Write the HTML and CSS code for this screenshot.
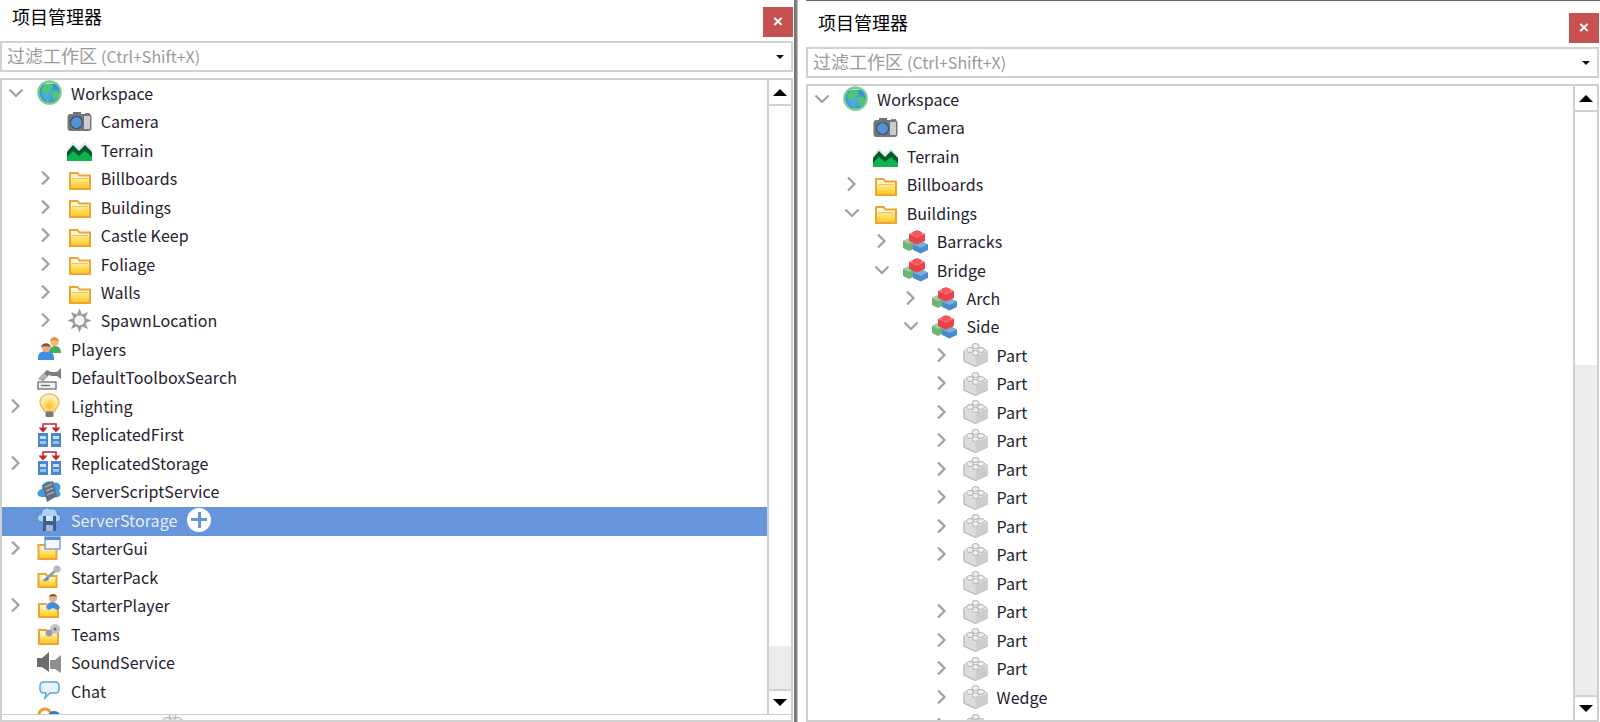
FILE: index.html
```html
<!DOCTYPE html>
<html lang="zh-CN">
<head>
  <meta charset="UTF-8">
  <title>项目管理器</title>
  <link rel="stylesheet" href="styles.css">
</head>
<body>
  <!-- icon sprite -->
  <svg class="sprite" xmlns="http://www.w3.org/2000/svg">
    <defs>
      <linearGradient id="foldFill" x1="0" y1="0" x2="0" y2="1">
        <stop offset="0" stop-color="#fff8e4"/><stop offset=".34" stop-color="#fff4cc"/><stop offset=".38" stop-color="#ffe987"/><stop offset="1" stop-color="#fdc51e"/>
      </linearGradient>
      <radialGradient id="globeFill" cx=".42" cy=".6" r=".65">
        <stop offset="0" stop-color="#56aef0"/><stop offset="1" stop-color="#2e86cc"/>
      </radialGradient>
      <radialGradient id="bulbFill" cx=".5" cy=".68" r=".62">
        <stop offset="0" stop-color="#fbb92a"/><stop offset=".55" stop-color="#ffe48a"/><stop offset="1" stop-color="#fff6d6"/>
      </radialGradient>
    </defs>
    <symbol id="chev-r" viewBox="0 0 16 16"><path d="M4 1.500 10.500 8 4 14.500" fill="none" stroke="#a0a0a0" stroke-width="2.200"/></symbol>
    <symbol id="chev-d" viewBox="0 0 16 16"><path d="M1.500 4.500 8 11l6.500-6.500" fill="none" stroke="#a0a0a0" stroke-width="2.200"/></symbol>
    <symbol id="globe" viewBox="0 0 25 25">
      <circle cx="12.500" cy="12.500" r="11.200" fill="url(#globeFill)" stroke="#7ccf84" stroke-width="2.200"/>
      <path d="M4 9c3-5 8-6 11-4s-1 4-2 6-4 1-4 3-3 1-5-5zM14 12c3-2 7-2 8 1s-3 7-5 7-1-4-2-5-2-2-1-3zM9 18c2 0 3 1 3 3s-3 0-3-3z" fill="#4ec676"/>
      <path d="M6 5q6-4 12-1-6-1-12 1z" fill="#d8f3e0"/>
    </symbol>
    <symbol id="camera" viewBox="0 0 25 25">
      <rect x="6" y="3" width="8" height="4" fill="#6e7277"/>
      <rect x="18" y="4" width="5" height="3" fill="#85898e"/>
      <rect x=".5" y="5" width="24" height="17" rx="3" fill="#73777c"/>
      <rect x="17" y="7" width="6" height="13" fill="#c9ccd0"/>
      <circle cx="9.500" cy="13.500" r="6" fill="#4f93dc" stroke="#4a4e53" stroke-width="1.200"/>
    </symbol>
    <symbol id="terrain" viewBox="0 0 25 25">
      <path d="M0 12 6 5l6 5 6-5 7 7v10H0z" fill="#e3ebe5"/>
      <path d="M0 15 6 8l6 6 6-6 7 7v7H0z" fill="#065a2c"/>
      <path d="M0 20l6-6 6 5 6-5 7 6v4H0z" fill="#10b24e"/>
    </symbol>
    <symbol id="folder" viewBox="0 0 25 25">
      <path d="M3 7h7.500l2 2.500H23V23H3z" fill="url(#foldFill)" stroke="#f0a430" stroke-width="2"/>
      <path d="M5 12.500h16" stroke="#e8c474" stroke-width="1"/>
    </symbol>
    <symbol id="spawn" viewBox="0 0 25 25">
      <polygon points="24.500,12.500 18.500,10 21,4 15,6.500 12.500,.5 10,6.500 4,4 6.500,10 .5,12.500 6.500,15 4,21 10,18.500 12.500,24.500 15,18.500 21,21 18.500,15" fill="#9c9c9c"/>
      <circle cx="12.500" cy="12.500" r="5" fill="#f4f4f4"/>
    </symbol>
    <symbol id="players" viewBox="0 0 25 25">
      <path d="M12 17q0-7 6-7t6 7z" fill="#48ad55"/>
      <circle cx="17.500" cy="6" r="4" fill="#f3b673"/>
      <path d="M13 5c1-5 8-5 9 0-3-1-6-1-9 0z" fill="#e88a2a"/>
      <path d="M1 24v-2q0-7 8-7t8 7v2z" fill="#3f90de"/>
      <circle cx="9" cy="12" r="4.200" fill="#e9ad85"/>
      <path d="M4 11c1-5 9-5 10 0-3-1-7-1-10 0z" fill="#8c5530"/>
    </symbol>
    <symbol id="toolbox" viewBox="0 0 25 25">
      <path d="M1 14 10 5l4 2h6l4-4v11l-4-3h-5l-3-1-6 6z" fill="#7d7d7d"/>
      <path d="M1 14l6-6 4 4-6 3z" fill="#b4b4b4"/>
      <rect x="1" y="17" width="18" height="7" fill="#efefef" stroke="#6f6f6f" stroke-width="1.300"/>
      <path d="M4 20.500h9" stroke="#6f6f6f" stroke-width="1.300"/>
    </symbol>
    <symbol id="bulb" viewBox="0 0 25 25">
      <path d="M12.500 1c6 0 9.500 4 9.500 8.500 0 4-3.500 5.500-4.500 9h-10C6.500 15 3 13.500 3 9.500 3 5 6.500 1 12.500 1z" fill="url(#bulbFill)" stroke="#ecbb66" stroke-width="1.500"/>
      <rect x="8.500" y="18.500" width="8" height="5.500" rx="1.500" fill="#77797c"/>
    </symbol>
    <symbol id="replicated" viewBox="0 0 25 25">
      <path d="M6 7V2h13v5" fill="none" stroke="#c8242c" stroke-width="1.500"/>
      <path d="M1.500 5.500h9l-4.500 5zM14.500 5.500h9l-4.500 5z" fill="#c8242c"/>
      <rect x="1" y="11" width="10" height="14" fill="#4a86cc"/>
      <rect x="14" y="11" width="10" height="14" fill="#4a86cc"/>
      <path d="M3 14h6v3H3zM16 14h6v3h-6z" fill="#c6def6"/>
      <path d="M3 19h6v3H3zM16 19h6v3h-6z" fill="#98c1ea"/>
    </symbol>
    <symbol id="script-svc" viewBox="0 0 25 25">
      <path d="M5 18c-6 0-6-7 0-8 0-7 7-10 11-6 5-2 10 3 6 8 4 4-1 8-6 6z" fill="#3f9be0"/>
      <path d="M5 6l11-4 4 15-10 6z" fill="#66707c"/>
      <path d="M8 8l7-3M9 12l7-3M10 16l7-3" stroke="#b5bdc6" stroke-width="1.200"/>
    </symbol>
    <symbol id="storage-svc" viewBox="0 0 25 25">
      <path d="M4 15c-5-1-5-7 0-8 1-6 6-7 9-5 5-1 8 2 7 5 5 1 5 7 0 8z" fill="#a9d3f5" stroke="#3f86cc" stroke-width="1"/>
      <path d="M6 9h13v15H6z" fill="#3d5f88"/>
      <rect x="9" y="9" width="7" height="5" fill="#d8e4f2"/>
      <rect x="9" y="18" width="7" height="6" fill="#9fb8d4"/>
    </symbol>
    <symbol id="starter-gui" viewBox="0 0 25 25">
      <path d="M1.500 9h7l2 2h9v12h-18z" fill="url(#foldFill)" stroke="#f0a430" stroke-width="2"/>
      <rect x="8" y="1" width="15" height="12" fill="#f4f7fb" stroke="#5a8fd0" stroke-width="1.200"/>
      <rect x="8" y="1" width="15" height="3" fill="#4f8dd6"/>
    </symbol>
    <symbol id="starter-pack" viewBox="0 0 25 25">
      <path d="M1.500 10h7l2 2h9v11h-18z" fill="url(#foldFill)" stroke="#f0a430" stroke-width="2"/>
      <path d="M7 17 19 6" stroke="#9a9ea3" stroke-width="3"/>
      <circle cx="20" cy="5" r="3.500" fill="#b4b7bb"/>
      <path d="M7 17l5-1-2-3z" fill="#4a90dc"/>
    </symbol>
    <symbol id="starter-player" viewBox="0 0 25 25">
      <path d="M2 11h7l2 2h10v11H2z" fill="url(#foldFill)" stroke="#f0a430" stroke-width="2"/>
      <path d="M9 15q2-7 7-6t7 6l-3 2-4-2-4 2z" fill="#3f90de"/>
      <circle cx="16" cy="5" r="4" fill="#e9ad85"/>
      <path d="M12 4c1-4 7-4 8 0-3-1-5-1-8 0z" fill="#8c5530"/>
    </symbol>
    <symbol id="teams" viewBox="0 0 25 25">
      <path d="M2 9h7l2 2h10v12H2z" fill="url(#foldFill)" stroke="#f0a430" stroke-width="2"/>
      <circle cx="18" cy="8" r="5" fill="#c2c4c6"/>
      <circle cx="12" cy="12" r="3.500" fill="#9b9da0"/>
      <circle cx="18" cy="8" r="1.500" fill="#6e7073"/>
    </symbol>
    <symbol id="sound" viewBox="0 0 25 25">
      <path d="M0 8h5l7-6v20l-7-5H0z" fill="#6b6d70"/>
      <path d="M24 5v18l-6-4h-5V10h5z" fill="#8d8f92"/>
    </symbol>
    <symbol id="chat" viewBox="0 0 25 25">
      <path d="M7 4h11q4 0 4 4v3q0 4-4 4h-5l-5 5 1-5H7q-4 0-4-4V8q0-4 4-4z" fill="#e9f4fd" stroke="#54a7e2" stroke-width="1.500"/>
    </symbol>
    <symbol id="model" viewBox="0 0 25 25">
      <polygon points="0,12 6,9 12,12 12,19 6,22 0,19" fill="#6fb477"/>
      <polygon points="0,12 6,15 12,12 6,9" fill="#9ccfa2"/>
      <polygon points="10,15.500 17.500,12 25,15.500 25,21 17.500,24.500 10,21" fill="#4a8ccb"/>
      <polygon points="10,15.500 17.500,19 25,15.500 17.500,12" fill="#79aede"/>
      <polygon points="6,5 14,1.500 22,5 22,12 14,15.500 6,12" fill="#e9434a"/>
      <polygon points="6,5 14,8.500 22,5 14,1.500" fill="#f98085"/>
      <ellipse cx="14" cy="4.500" rx="4.500" ry="3" fill="#f2575d"/>
    </symbol>
    <symbol id="part" viewBox="0 0 25 25">
      <polygon points="12.500,4 24,9 24,19 12.500,24.500 1,19 1,9" fill="#dcdcdc" stroke="#b8b8b8" stroke-width="1.300"/>
      <polygon points="12.500,14 24,9 24,19 12.500,24.500" fill="#cdcdcd"/>
      <polygon points="1,9 12.500,14 24,9 12.500,4" fill="#f6f6f6"/>
      <ellipse cx="12.500" cy="4" rx="3.500" ry="2.500" fill="#eee" stroke="#b0b0b0"/>
      <ellipse cx="7" cy="8" rx="3.500" ry="2.500" fill="#eee" stroke="#b0b0b0"/>
      <ellipse cx="18" cy="8" rx="3.500" ry="2.500" fill="#eee" stroke="#b0b0b0"/>
      <ellipse cx="12.500" cy="11" rx="3.500" ry="2.500" fill="#eee" stroke="#b0b0b0"/>
    </symbol>
    <symbol id="localize" viewBox="0 0 25 25">
      <circle cx="8" cy="8" r="6" fill="none" stroke="#f09a2c" stroke-width="3"/>
      <path d="M10 14q0-10 7-10t8 10z" fill="#2f78c4"/>
    </symbol>
  </svg>

  <div class="page">
    <section class="panel panel-left">
      <header class="titlebar">
        <h1 class="title">项目管理器</h1>
        <button class="close">×</button>
      </header>
      <div class="filter">
        <span class="filter-text">过滤工作区 <small>(Ctrl+Shift+X)</small></span>
        <span class="drop"></span>
      </div>
      <div class="tree">
        <div class="rows">
          <div class="row"><span class="tw"><svg class="chev"><use href="#chev-d"/></svg></span><svg class="ico"><use href="#globe"/></svg><span class="label">Workspace</span></div>
          <div class="row d1"><span class="tw"></span><svg class="ico"><use href="#camera"/></svg><span class="label">Camera</span></div>
          <div class="row d1"><span class="tw"></span><svg class="ico"><use href="#terrain"/></svg><span class="label">Terrain</span></div>
          <div class="row d1"><span class="tw"><svg class="chev"><use href="#chev-r"/></svg></span><svg class="ico"><use href="#folder"/></svg><span class="label">Billboards</span></div>
          <div class="row d1"><span class="tw"><svg class="chev"><use href="#chev-r"/></svg></span><svg class="ico"><use href="#folder"/></svg><span class="label">Buildings</span></div>
          <div class="row d1"><span class="tw"><svg class="chev"><use href="#chev-r"/></svg></span><svg class="ico"><use href="#folder"/></svg><span class="label">Castle Keep</span></div>
          <div class="row d1"><span class="tw"><svg class="chev"><use href="#chev-r"/></svg></span><svg class="ico"><use href="#folder"/></svg><span class="label">Foliage</span></div>
          <div class="row d1"><span class="tw"><svg class="chev"><use href="#chev-r"/></svg></span><svg class="ico"><use href="#folder"/></svg><span class="label">Walls</span></div>
          <div class="row d1"><span class="tw"><svg class="chev"><use href="#chev-r"/></svg></span><svg class="ico"><use href="#spawn"/></svg><span class="label">SpawnLocation</span></div>
          <div class="row"><span class="tw"></span><svg class="ico"><use href="#players"/></svg><span class="label">Players</span></div>
          <div class="row"><span class="tw"></span><svg class="ico"><use href="#toolbox"/></svg><span class="label">DefaultToolboxSearch</span></div>
          <div class="row"><span class="tw"><svg class="chev"><use href="#chev-r"/></svg></span><svg class="ico"><use href="#bulb"/></svg><span class="label">Lighting</span></div>
          <div class="row"><span class="tw"></span><svg class="ico"><use href="#replicated"/></svg><span class="label">ReplicatedFirst</span></div>
          <div class="row"><span class="tw"><svg class="chev"><use href="#chev-r"/></svg></span><svg class="ico"><use href="#replicated"/></svg><span class="label">ReplicatedStorage</span></div>
          <div class="row"><span class="tw"></span><svg class="ico"><use href="#script-svc"/></svg><span class="label">ServerScriptService</span></div>
          <div class="row selected"><span class="tw"></span><svg class="ico"><use href="#storage-svc"/></svg><span class="label">ServerStorage</span><span class="add"></span></div>
          <div class="row"><span class="tw"><svg class="chev"><use href="#chev-r"/></svg></span><svg class="ico"><use href="#starter-gui"/></svg><span class="label">StarterGui</span></div>
          <div class="row"><span class="tw"></span><svg class="ico"><use href="#starter-pack"/></svg><span class="label">StarterPack</span></div>
          <div class="row"><span class="tw"><svg class="chev"><use href="#chev-r"/></svg></span><svg class="ico"><use href="#starter-player"/></svg><span class="label">StarterPlayer</span></div>
          <div class="row"><span class="tw"></span><svg class="ico"><use href="#teams"/></svg><span class="label">Teams</span></div>
          <div class="row"><span class="tw"></span><svg class="ico"><use href="#sound"/></svg><span class="label">SoundService</span></div>
          <div class="row"><span class="tw"></span><svg class="ico"><use href="#chat"/></svg><span class="label">Chat</span></div>
          <div class="row row-cut"><span class="tw"></span><svg class="ico"><use href="#localize"/></svg><span class="label">LocalizationService</span></div>
        </div>
        <div class="vscroll">
          <div class="sb-btn"><span class="arrow-up"></span></div>
          <div class="thumb thumb-left"></div>
          <div class="track"></div>
          <div class="sb-btn sb-btn-down"><span class="arrow-down"></span></div>
        </div>
      </div>
      <div class="strip"><svg class="ico strip-ico"><use href="#part"/></svg></div>
    </section>

    <div class="splitter"></div>

    <section class="panel panel-right">
      <header class="titlebar">
        <h1 class="title">项目管理器</h1>
        <button class="close">×</button>
      </header>
      <div class="filter">
        <span class="filter-text">过滤工作区 <small>(Ctrl+Shift+X)</small></span>
        <span class="drop"></span>
      </div>
      <div class="tree">
        <div class="rows">
          <div class="row"><span class="tw"><svg class="chev"><use href="#chev-d"/></svg></span><svg class="ico"><use href="#globe"/></svg><span class="label">Workspace</span></div>
          <div class="row d1"><span class="tw"></span><svg class="ico"><use href="#camera"/></svg><span class="label">Camera</span></div>
          <div class="row d1"><span class="tw"></span><svg class="ico"><use href="#terrain"/></svg><span class="label">Terrain</span></div>
          <div class="row d1"><span class="tw"><svg class="chev"><use href="#chev-r"/></svg></span><svg class="ico"><use href="#folder"/></svg><span class="label">Billboards</span></div>
          <div class="row d1"><span class="tw"><svg class="chev"><use href="#chev-d"/></svg></span><svg class="ico"><use href="#folder"/></svg><span class="label">Buildings</span></div>
          <div class="row d2"><span class="tw"><svg class="chev"><use href="#chev-r"/></svg></span><svg class="ico"><use href="#model"/></svg><span class="label">Barracks</span></div>
          <div class="row d2"><span class="tw"><svg class="chev"><use href="#chev-d"/></svg></span><svg class="ico"><use href="#model"/></svg><span class="label">Bridge</span></div>
          <div class="row d3"><span class="tw"><svg class="chev"><use href="#chev-r"/></svg></span><svg class="ico"><use href="#model"/></svg><span class="label">Arch</span></div>
          <div class="row d3"><span class="tw"><svg class="chev"><use href="#chev-d"/></svg></span><svg class="ico"><use href="#model"/></svg><span class="label">Side</span></div>
          <div class="row d4"><span class="tw"><svg class="chev"><use href="#chev-r"/></svg></span><svg class="ico"><use href="#part"/></svg><span class="label">Part</span></div>
          <div class="row d4"><span class="tw"><svg class="chev"><use href="#chev-r"/></svg></span><svg class="ico"><use href="#part"/></svg><span class="label">Part</span></div>
          <div class="row d4"><span class="tw"><svg class="chev"><use href="#chev-r"/></svg></span><svg class="ico"><use href="#part"/></svg><span class="label">Part</span></div>
          <div class="row d4"><span class="tw"><svg class="chev"><use href="#chev-r"/></svg></span><svg class="ico"><use href="#part"/></svg><span class="label">Part</span></div>
          <div class="row d4"><span class="tw"><svg class="chev"><use href="#chev-r"/></svg></span><svg class="ico"><use href="#part"/></svg><span class="label">Part</span></div>
          <div class="row d4"><span class="tw"><svg class="chev"><use href="#chev-r"/></svg></span><svg class="ico"><use href="#part"/></svg><span class="label">Part</span></div>
          <div class="row d4"><span class="tw"><svg class="chev"><use href="#chev-r"/></svg></span><svg class="ico"><use href="#part"/></svg><span class="label">Part</span></div>
          <div class="row d4"><span class="tw"><svg class="chev"><use href="#chev-r"/></svg></span><svg class="ico"><use href="#part"/></svg><span class="label">Part</span></div>
          <div class="row d4"><span class="tw"></span><svg class="ico"><use href="#part"/></svg><span class="label">Part</span></div>
          <div class="row d4"><span class="tw"><svg class="chev"><use href="#chev-r"/></svg></span><svg class="ico"><use href="#part"/></svg><span class="label">Part</span></div>
          <div class="row d4"><span class="tw"><svg class="chev"><use href="#chev-r"/></svg></span><svg class="ico"><use href="#part"/></svg><span class="label">Part</span></div>
          <div class="row d4"><span class="tw"><svg class="chev"><use href="#chev-r"/></svg></span><svg class="ico"><use href="#part"/></svg><span class="label">Part</span></div>
          <div class="row d4"><span class="tw"><svg class="chev"><use href="#chev-r"/></svg></span><svg class="ico"><use href="#part"/></svg><span class="label">Wedge</span></div>
          <div class="row d4 row-cut"><span class="tw"><svg class="chev"><use href="#chev-r"/></svg></span><svg class="ico"><use href="#part"/></svg><span class="label">Wedge</span></div>
        </div>
        <div class="vscroll">
          <div class="sb-btn"><span class="arrow-up"></span></div>
          <div class="thumb thumb-right"></div>
          <div class="track"></div>
          <div class="sb-btn sb-btn-down"><span class="arrow-down"></span></div>
        </div>
      </div>
    </section>
  </div>
</body>
</html>
```
FILE: styles.css
```css
* {
  box-sizing: border-box;
}

html, body {
  margin: 0;
  height: 100%;
  background: #fff;
  overflow: hidden;
}

body {
  font-family: "Noto Sans CJK SC", "Noto Sans", sans-serif;
  font-size: 16px;
  color: #1f2030;
}

.sprite {
  position: absolute;
  width: 0;
  height: 0;
}

.page {
  display: flex;
  height: 722px;
}

.panel {
  display: flex;
  flex-direction: column;
  width: 793px;
  height: 722px;
  flex: none;
}

.panel-right {
  width: 794px;
  margin-left: 8px;
  padding-top: 5px;
  padding-right: 1px;
  border-top: 1px solid #6a6a6a;
}

.splitter {
  width: 4px;
  margin-left: 1px;
  background: linear-gradient(to right, #707070, #808080 60%, #d8d8d8);
  flex: none;
}

.titlebar {
  display: flex;
  justify-content: space-between;
  align-items: flex-start;
  height: 41px;
  flex: none;
}

.title {
  margin: 4px 0 0 12px;
  font-size: 18px;
  font-weight: 400;
  line-height: 24px;
  color: #000;
}

.close {
  width: 30px;
  height: 30px;
  margin-top: 7px;
  padding: 0;
  border: 0;
  background: #c75050;
  color: #fff;
  font: 700 17px "Liberation Sans", sans-serif;
}

.filter {
  display: flex;
  align-items: center;
  justify-content: space-between;
  height: 31px;
  margin-bottom: 6px;
  padding: 0 7px 3px 5px;
  border: 2px solid #d2d2d2;
  flex: none;
}

.filter-text {
  font-size: 18px;
  line-height: 24px;
  color: #9a9a9a;
}

.filter-text small {
  font-size: 16px;
}

.drop {
  width: 0;
  height: 0;
  margin-top: 3px;
  border-left: 4px solid transparent;
  border-right: 4px solid transparent;
  border-top: 4px solid #111;
}

.tree {
  display: flex;
  flex: 1;
  min-height: 0;
  border: 2px solid #cfcfcf;
  border-bottom-width: 1px;
}

.panel-right .tree {
  border-bottom-width: 2px;
}

.rows {
  flex: 1;
  min-width: 0;
  overflow: hidden;
}

.row {
  display: flex;
  align-items: center;
  height: 28.47px;
  padding-bottom: 3px;
  white-space: nowrap;
}

.row-cut .label {
  padding-top: 4px;
}

.d1 { padding-left: 29.7px; }
.d2 { padding-left: 59.7px; }
.d3 { padding-left: 89.4px; }
.d4 { padding-left: 119.5px; }

.tw {
  display: flex;
  justify-content: center;
  align-items: center;
  width: 28px;
  flex: none;
}

.chev {
  width: 16px;
  height: 16px;
}

.ico {
  width: 25px;
  height: 25px;
  margin-left: 7px;
  flex: none;
}

.label {
  margin-left: 9px;
  line-height: 24px;
  letter-spacing: .08px;
}

.selected {
  background: #6795db;
}

.selected .label {
  color: #e8eefa;
}

.add {
  position: relative;
  width: 24px;
  height: 24px;
  margin-left: 10px;
  border-radius: 50%;
  background: #fff;
}

.add::before,
.add::after {
  content: "";
  position: absolute;
  background: #6795db;
}

.add::before {
  left: 4px;
  right: 4px;
  top: 10.5px;
  height: 3px;
}

.add::after {
  top: 4px;
  bottom: 4px;
  left: 10.5px;
  width: 3px;
}

.vscroll {
  display: flex;
  flex-direction: column;
  width: 24px;
  flex: none;
  border-left: 2px solid #cfcfcf;
}

.sb-btn {
  display: flex;
  align-items: center;
  justify-content: center;
  height: 26px;
  flex: none;
  border-bottom: 2px solid #d2d2d2;
}

.sb-btn-down {
  border-bottom: 0;
  border-top: 2px solid #d2d2d2;
  height: 25px;
}

.arrow-up,
.arrow-down {
  width: 0;
  height: 0;
  border-left: 7px solid transparent;
  border-right: 7px solid transparent;
}

.arrow-up {
  border-bottom: 7px solid #000;
}

.arrow-down {
  border-top: 7px solid #000;
}

.thumb {
  background: #fff;
  flex: none;
}

.thumb-left {
  height: 540px;
}

.thumb-right {
  height: 253px;
}

.track {
  flex: 1;
  background: #ececec;
}

.strip {
  height: 7px;
  flex: none;
  padding-left: 151px;
  overflow: hidden;
  border-bottom: 2px solid #d2d2d2;
  border-left: 2px solid #cfcfcf;
  border-right: 2px solid #cfcfcf;
}

.strip-ico {
  display: block;
  margin-top: -3px;
}
```
